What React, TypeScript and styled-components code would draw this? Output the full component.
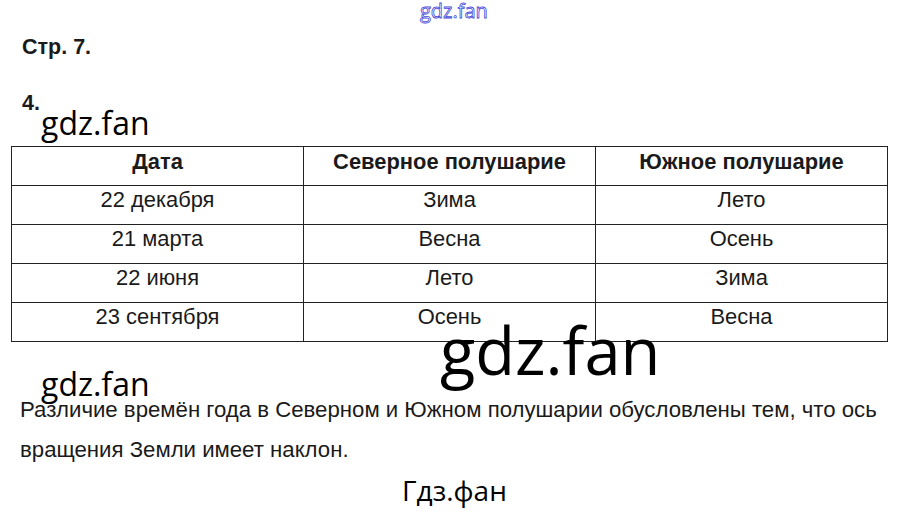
import React from "react";
import styled, { createGlobalStyle } from "styled-components";

const Global = createGlobalStyle`
  html, body { margin: 0; padding: 0; background: #fff; }
  body { font-family: "Liberation Sans", Arial, sans-serif; color: #111; }
`;

const Page = styled.div`
  position: relative;
  width: 905px;
  height: 514px;
  overflow: hidden;
  background: #fff;
`;

const Content = styled.div`
  display: flex;
  flex-direction: column;
  padding: 35px 17px 0 11px;
`;

const Heading = styled.div<{ $top?: number }>`
  font-size: 21.5px;
  font-weight: bold;
  color: #1a1a1a;
  padding-left: 11px;
  margin-top: ${(p) => p.$top ?? 0}px;
  line-height: 24px;
`;

const Table = styled.table`
  width: 877px;
  border-collapse: collapse;
  table-layout: fixed;
  margin-top: 31px;
`;

const Th = styled.th`
  border: 1px solid #222;
  height: 39px;
  font-size: 21.9px;
  font-weight: bold;
  line-height: 26px;
  color: #1a1a1a;
  text-align: center;
  vertical-align: top;
  padding: 2px 0 0;
  box-sizing: border-box;
`;

const Td = styled.td`
  border: 1px solid #222;
  height: 39px;
  font-size: 21.9px;
  line-height: 26px;
  color: #1a1a1a;
  text-align: center;
  vertical-align: top;
  padding: 1px 0 0;
  box-sizing: border-box;
`;

const Paragraph = styled.p`
  margin: 48px 0 0 9px;
  font-size: 22.2px;
  line-height: 40px;
  color: #1a1a1a;
  white-space: nowrap;
`;

const Mark = styled.div<{ $x: number; $y: number; $size: number }>`
  position: absolute;
  left: ${(p) => p.$x}px;
  top: ${(p) => p.$y}px;
  font-family: "Open Sans", "Noto Sans", sans-serif;
  font-size: ${(p) => p.$size}px;
  line-height: 1.1;
  color: #000;
  white-space: nowrap;
`;

const OutlineMark = styled(Mark)`
  color: transparent;
  -webkit-text-stroke: 0.8px #4a4ad8;
`;

const rows = [
  ["22 декабря", "Зима", "Лето"],
  ["21 марта", "Весна", "Осень"],
  ["22 июня", "Лето", "Зима"],
  ["23 сентября", "Осень", "Весна"],
];

export default function App() {
  return (
    <Page>
      <Global />
      <Content>
        <Heading>Стр. 7.</Heading>
        <Heading $top={32}>4.</Heading>
        <Table>
          <thead>
            <tr>
              <Th>Дата</Th>
              <Th>Северное полушарие</Th>
              <Th>Южное полушарие</Th>
            </tr>
          </thead>
          <tbody>
            {rows.map((r) => (
              <tr key={r[0]}>
                {r.map((c, i) => (
                  <Td key={i}>{c}</Td>
                ))}
              </tr>
            ))}
          </tbody>
        </Table>
        <Paragraph>
          Различие времён года в Северном и Южном полушарии обусловлены тем, что ось
          <br />
          вращения Земли имеет наклон.
        </Paragraph>
      </Content>
      <OutlineMark $x={420} $y={0} $size={20}>gdz.fan</OutlineMark>
      <Mark $x={41} $y={105} $size={32}>gdz.fan</Mark>
      <Mark $x={440} $y={315} $size={65}>gdz.fan</Mark>
      <Mark $x={41} $y={366} $size={32}>gdz.fan</Mark>
      <Mark $x={402} $y={475} $size={28}>Гдз.фан</Mark>
    </Page>
  );
}
